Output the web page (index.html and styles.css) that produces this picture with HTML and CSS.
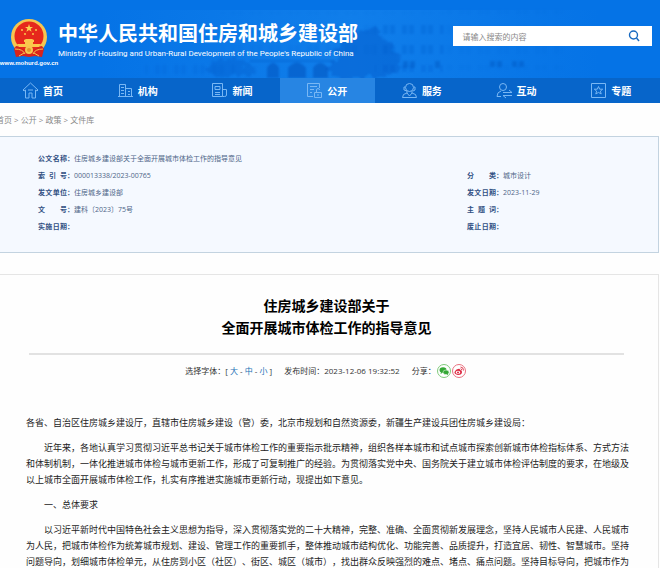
FILE: index.html
```html
<!DOCTYPE html>
<html lang="zh-CN">
  <head>
    <meta charset="UTF-8" />
    <meta name="viewport" content="width=device-width, initial-scale=1.0" />
    <title>住房城乡建设部关于全面开展城市体检工作的指导意见</title>
    <link rel="stylesheet" href="styles.css">
  </head>
  <body>
    <header class="header">
      <!-- faint building behind the banner -->
      <svg class="skyline" viewBox="0 0 660 78" preserveAspectRatio="none" aria-hidden="true">
        <defs>
          <pattern id="windows" width="19" height="20" patternUnits="userSpaceOnUse">
            <path d="M3 5h5v9H3zM10 5h5v9h-5z" fill="#0b62d3" />
          </pattern>
          <linearGradient id="fade">
            <stop offset="0" stop-color="#1583ec" stop-opacity="0" />
            <stop offset="0.5" stop-color="#1583ec" stop-opacity="0.7" />
            <stop offset="1" stop-color="#1583ec" stop-opacity="0" />
          </linearGradient>
          <filter id="soft"><feGaussianBlur stdDeviation="1" /></filter>
          <filter id="leaves" x="-10%" y="-10%" width="120%" height="120%">
            <feTurbulence type="fractalNoise" baseFrequency="0.15" numOctaves="2" result="noise" />
            <feDisplacementMap in="SourceGraphic" in2="noise" scale="14" xChannelSelector="R" yChannelSelector="G" />
            <feGaussianBlur stdDeviation="1" />
          </filter>
        </defs>
        <path d="M100 10h500v68H100z" fill="url(#fade)" />
        <g filter="url(#soft)">
          <path d="M222 12h225v48H222z" fill="url(#windows)" opacity="0.15" />
          <path d="M447 10h116v60H447z" fill="url(#windows)" opacity="0.15" />
          <path d="M375 16h68v56h-68z" fill="url(#windows)" opacity="0.3" />
          <path d="M145 60h90v14h-90z" fill="url(#windows)" opacity="0.2" />
          <path d="M267 78V68q6-10 12 0v10zM288 78V68q9-11 18 0v10zM313 78V68q7-10 15 0v10z" fill="#064db9" opacity="0.5" />
          <path d="M250 60h85v2h-85z" fill="#0759c6" opacity="0.4" />
          <path d="M403 61h5v7h-5zM410 61h5v7h-5zM435 61h5v7h-5zM490 61h5v6h-5zM497 61h5v6h-5zM512 61h5v6h-5zM519 61h5v6h-5z" fill="#0759c6" opacity="0.5" />
        </g>
        <g filter="url(#leaves)" fill="#0655c2">
          <path d="M328 73l3-10 6-5-1-8 9-7 3-8 10-3 6-5 10 2 8 5 4 8 7 4 2 8 7 4-4 6 4 5-7 4-8 2-9 3h-20l-16 1z" opacity="0.4" />
          <path d="M207 70l4-8 8-4 8 2 7-3 9 6 11 5 2 5-9 3h-35z" opacity="0.3" />
        </g>
      </svg>
      <div class="banner">
        <a class="logo" href="#">
          <svg class="emblem" viewBox="0 0 36 39" aria-hidden="true">
            <circle cx="18" cy="18" r="18" fill="#f6c64f" />
            <path d="M5 27l6 1 7 2 7-2 6-1 2 3-2 8-7-1-6 1-6-1-7 1-2-8z" fill="#d8231c" />
            <circle cx="18" cy="17" r="14.5" fill="#e6281c" />
            <path d="M18 5l1 3h3l-2.400 1.800 1 3L18 11l-2.600 1.800 1-3L14 8h3z" fill="#fbd352" />
            <g fill="#fbc94b">
              <circle cx="11" cy="11" r="1" />
              <circle cx="25" cy="11" r="1" />
              <circle cx="14" cy="15" r="1" />
              <circle cx="22" cy="15" r="1" />
              <path d="M13 21l2-1h6l2 1v2H13zM6 25h24l-2 3H8z" />
              <path d="M14 23h8v2h-8z" />
            </g>
            <circle cx="18" cy="31" r="4" fill="#f6c64f" />
            <circle cx="18" cy="31" r="2" fill="#e49a2b" />
            <path d="M4 30q8 0 10 5M32 30q-8 0-10 5M8 37l5-3M28 37l-5-3" fill="none" stroke="#f6c64f" />
          </svg>
          <span class="logo-url">www.mohurd.gov.cn</span>
        </a>
        <div class="site-name">
          <h2>中华人民共和国住房和城乡建设部</h2>
          <p>Ministry of Housing and Urban-Rural Development of the People's Republic of China</p>
        </div>
        <form class="search">
          <input type="text" aria-label="搜索" placeholder="请输入搜索的内容" />
          <button type="button" aria-label="搜索">
            <svg viewBox="0 0 12 12"><circle cx="5.500" cy="5" r="4" /><path d="M8.500 8l2.500 3" /></svg>
          </button>
        </form>
      </div>
    </header>

    <nav class="nav">
      <ul>
        <li><a href="#">
          <svg viewBox="0 0 17 17"><path d="M1 8l7.500-7L16 8l-1 1-1.500-1v8h-3.500v-5H7v5H3.500V8L2 9zM6 8h5" /></svg>首页</a></li>
        <li><a href="#">
          <svg viewBox="0 0 17 17"><path d="M1 14.500h15M2.500 14V2.500h6V14M8.500 6.500h6V14M4 5.500h3M4 8.500h3M4 11.500h3M11 9.500h2M11 12.500h2" /></svg>机构</a></li>
        <li><a href="#">
          <svg viewBox="0 0 17 17"><path d="M1.500 1.500h10v13h-10zM11.500 7.500h4V13q0 1.500-2 1.500h-2M4 4.500h5v3H4zM4 10.500h5M4 12.500h5" /></svg>新闻</a></li>
        <li class="active"><a href="#">
          <svg viewBox="0 0 17 17"><path d="M7 14.500H1.500v-13h12V6M4 4.500h7M4 7.500h4M4 10.500h2M8.500 10.500h7v5h-7zM10.500 10V8q0-1.500 1.500-1.500t1.500 1.500M12 12v2" /></svg>公开</a></li>
        <li><a href="#">
          <svg viewBox="0 0 17 17"><circle cx="8.500" cy="5.500" r="4" /><path d="M4 5H3v3l3 1M13 5h1v3l-2 1M6 9v2l-3.500 1.500-1 3h14l-1-3L11 11V9M6 11l2.500 3 2.500-3" /></svg>服务</a></li>
        <li><a href="#">
          <svg viewBox="0 0 17 17"><circle cx="7" cy="5" r="3.500" /><path d="M5 9q-4 1-4 5.500h4M7 10.500h9l-3-2.500M16 13.500H7l3 2.500" /></svg>互动</a></li>
        <li><a href="#">
          <svg viewBox="0 0 17 17"><path d="M1.500 1.500h14v14h-14zM8.500 4.500l1.200 2.700h3l-2.300 1.900.800 2.900-2.700-1.600L5.800 12l.800-2.900-2.300-1.900h3z" /></svg>专题</a></li>
      </ul>
    </nav>

    <div class="breadcrumb">
      <a href="#">首页</a> &gt; <a href="#">公开</a> &gt; <a href="#">政策</a> &gt; <a href="#">文件库</a>
    </div>

    <dl class="info">
      <div class="wide"><dt><span>公文名称</span>：</dt><dd>住房城乡建设部关于全面开展城市体检工作的指导意见</dd></div>
      <div><dt><span>索引号</span>：</dt><dd>000013338/2023-00765</dd></div>
      <div><dt><span>分类</span>：</dt><dd>城市设计</dd></div>
      <div><dt><span>发文单位</span>：</dt><dd>住房城乡建设部</dd></div>
      <div><dt><span>发文日期</span>：</dt><dd>2023-11-29</dd></div>
      <div><dt><span>文号</span>：</dt><dd>建科〔2023〕75号</dd></div>
      <div><dt><span>主题词</span>：</dt><dd></dd></div>
      <div><dt><span>实施日期</span>：</dt><dd></dd></div>
      <div><dt><span>废止日期</span>：</dt><dd></dd></div>
    </dl>

    <article class="article">
      <h1>住房城乡建设部关于<br />全面开展城市体检工作的指导意见</h1>
      <div class="meta">
        <span>选择字体：[ <a href="#">大</a> - <a href="#">中</a> - <a href="#">小</a> ]</span>
        <span>发布时间：2023-12-06 19:32:52</span>
        <span class="share">分享：
          <a href="#" aria-label="微信">
            <svg viewBox="0 0 14 14">
              <circle cx="7" cy="7" r="6.500" fill="#fff" stroke="#7fca7b" />
              <ellipse cx="6" cy="6" rx="3.500" ry="2.800" fill="#34a835" />
              <path d="M4 8l-.500 2L6 8.500z" fill="#34a835" />
              <ellipse cx="9" cy="8.300" rx="3" ry="2.300" fill="#34a835" stroke="#fff" stroke-width="0.500" />
              <path d="M9.500 10l1.500 1V9z" fill="#34a835" />
            </svg>
          </a>
          <a href="#" aria-label="微博">
            <svg viewBox="0 0 14 14">
              <circle cx="7" cy="7" r="6.500" fill="#fff" stroke="#e7707e" />
              <path d="M6 5q2-1 2 1 2 0 2 2 0 3-4 3-4-1-3.500-3Q4 5 6 5z" fill="#dc2840" />
              <ellipse cx="6" cy="8.300" rx="2.300" ry="1.600" fill="#fff" />
              <circle cx="6" cy="8.400" r="1" fill="#dc2840" />
              <path d="M8.500 3q3 0 3 3.500M8.500 4.800q1.300 0 1.200 1.400" fill="none" stroke="#dc2840" stroke-width="0.900" />
            </svg>
          </a>
        </span>
      </div>
      <div class="content">
        <p class="addressee">各省、自治区住房城乡建设厅，直辖市住房城乡建设（管）委，北京市规划和自然资源委，新疆生产建设兵团住房城乡建设局：</p>
        <p>近年来，各地认真学习贯彻习近平总书记关于城市体检工作的重要指示批示精神，组织各样本城市和试点城市探索创新城市体检指标体系、方式方法和体制机制，一体化推进城市体检与城市更新工作，形成了可复制推广的经验。为贯彻落实党中央、国务院关于建立城市体检评估制度的要求，在地级及以上城市全面开展城市体检工作，扎实有序推进实施城市更新行动，现提出如下意见。</p>
        <p>一、总体要求</p>
        <p>以习近平新时代中国特色社会主义思想为指导，深入贯彻落实党的二十大精神，完整、准确、全面贯彻新发展理念，坚持人民城市人民建、人民城市为人民，把城市体检作为统筹城市规划、建设、管理工作的重要抓手，整体推动城市结构优化、功能完善、品质提升，打造宜居、韧性、智慧城市。坚持问题导向，划细城市体检单元，从住房到小区（社区）、街区、城区（城市），找出群众反映强烈的难点、堵点、痛点问题。坚持目标导向，把城市作为</p>
      </div>
    </article>
  </body>
</html>
```
FILE: styles.css
```css
* {
  margin: 0;
  padding: 0;
  box-sizing: border-box;
}

body {
  background-color: #fefefe;
  color: #333;
  font-family: "Open Sans", "Noto Sans CJK SC", sans-serif;
  font-size: 8px;
  line-height: 16px;
  overflow-x: hidden;
  text-spacing-trim: space-all;
}

a {
  color: inherit;
  text-decoration: none;
}

.header {
  position: relative;
  background-color: #0573e6;
  color: #fff;
}

.skyline {
  position: absolute;
  width: 100%;
  height: 100%;
}

.banner {
  position: relative;
  display: flex;
  align-items: flex-start;
  height: 78px;
  padding: 19px 8px 0 0;
}

.logo {
  display: flex;
  flex-direction: column;
  align-items: center;
  width: 58px;
}

.emblem {
  width: 36px;
  height: 39px;
}

.logo-url {
  font-family: "Liberation Sans", Arial, sans-serif;
  font-size: 6px;
  font-weight: bold;
  line-height: 10px;
}

.site-name {
  flex: 1;
  white-space: nowrap;
}

.site-name h2 {
  font-size: 20px;
  line-height: 30px;
}

.site-name p {
  font-family: Roboto, Arial, sans-serif;
  line-height: 10px;
}

.search {
  display: flex;
  width: calc(30% + 3px);
  height: 20px;
  margin-top: 7px;
  background-color: #fff;
}

.search input {
  flex: 1;
  min-width: 0;
  padding-left: 9px;
  border: none;
  outline: none;
  background: none;
  font-family: inherit;
  font-size: 8px;
}

.search input::placeholder {
  color: #888;
}

.search button {
  width: 36px;
  border: none;
  background: none;
  cursor: pointer;
}

.search svg {
  display: block;
  width: 12px;
  height: 12px;
  margin: 0 auto;
  fill: none;
  stroke: #1769c0;
  stroke-width: 1.4;
}

.nav {
  background-color: #0765ca;
}

.nav ul {
  display: flex;
  list-style: none;
  margin: 0 1px 0 -4px;
}

.nav li {
  flex: 1;
}

.nav a {
  display: flex;
  align-items: center;
  gap: 4px;
  height: 25px;
  padding-left: 26px;
  color: #fff;
  font-size: 10px;
  font-weight: bold;
}

.nav svg {
  width: 17px;
  height: 17px;
  fill: none;
  stroke: #79b7f4;
}

.nav .active {
  background-color: #2785e3;
}

.breadcrumb {
  margin: 9px 0 8px -4px;
  color: #888;
}

.info {
  display: grid;
  grid-template-columns: 429fr 191fr;
  row-gap: 1px;
  margin-right: 1px;
  padding: 14px 0 17px 38px;
  background-color: #f5f9ff;
  border: 1px solid #c3d3e0;
  border-left: none;
  color: #4d6587;
  font-size: 7px;
}

.info div {
  display: flex;
}

.info .wide {
  grid-column: 1 / 3;
}

.info dt {
  display: flex;
  width: 36px;
  color: #315083;
  font-weight: bold;
}

.info dt span {
  width: 29px;
  text-align-last: justify;
}

.article {
  margin: 21px 1px 0 0;
  border-top: 1px solid #e5e5e5;
  border-right: 1px solid #e5e5e5;
}

.article h1 {
  margin: 0 34px 0 29px;
  padding: 20px 0 14px;
  border-bottom: 2px solid #e2e2e2;
  color: #000;
  font-size: 14px;
  line-height: 22px;
  text-align: center;
}

.meta {
  display: flex;
  justify-content: center;
  gap: 12px;
  padding: 8px 7px 0 0;
}

.meta a {
  color: #1b70b5;
}

.share {
  display: flex;
  align-items: center;
}

.share svg {
  display: block;
  width: 14px;
  height: 14px;
  margin-left: 1px;
}

.content {
  padding: 36px 27px 0 26px;
  color: #222;
  font-size: 9px;
}

.content p {
  margin-bottom: 9px;
  text-indent: 2em;
}

.content p:last-child {
  margin-bottom: 0;
}

.content .addressee {
  text-indent: 0;
}
```
